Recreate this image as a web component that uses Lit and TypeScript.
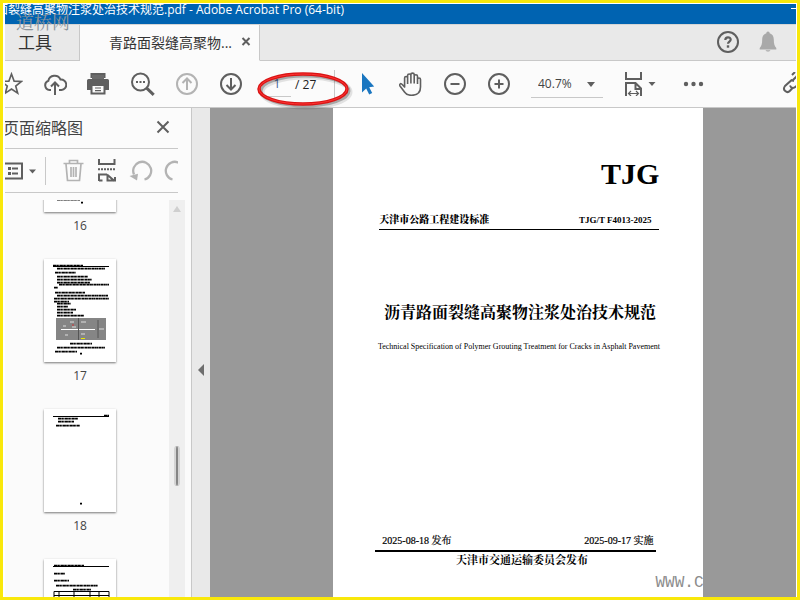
import { LitElement, html, svg, css } from "lit";
import { customElement } from "lit/decorators.js";

type Line = [x: number, y: number, w: number];

interface Thumb {
  n: number;
  rule: boolean;
  lines: Line[];
  figure?: boolean;
  table?: boolean;
}

const THUMBS: Thumb[] = [
  { n: 16, rule: true, lines: [[14, 80, 40], [14, 86, 40], [13, 91, 23], [37, 94, 2]] },
  {
    n: 17, rule: true, figure: true,
    lines: [[9, 7, 30], [13, 10, 48], [11, 14, 21], [13, 18, 31], [13, 21, 35], [13, 24, 33], [15, 26, 50],
      [10, 29, 4], [11, 34, 30], [13, 37, 51], [10, 40, 55], [10, 43, 15], [13, 45, 14], [13, 48, 11],
      [13, 51, 19], [13, 54, 16], [13, 57, 27], [26, 85, 22], [13, 89, 48], [11, 93, 22], [36, 95, 2]],
  },
  { n: 18, rule: true, lines: [[60, 7, 5], [14, 10, 20], [14, 13, 16], [12, 17, 24], [36, 95, 2]] },
  { n: 19, rule: true, table: true, lines: [[10, 7, 30], [10, 15, 11], [10, 22, 15], [12, 27, 42], [29, 31, 18]] },
];

@customElement("page-thumb")
class PageThumb extends LitElement {
  static properties = { page: { attribute: false } };
  declare page: Thumb;

  static styles = css`
    :host { display: flex; flex-direction: column; align-items: center; flex: none; height: 150px; }
    .sheet { display: block; width: 72px; height: 103px; padding: 0; border: 0; background: #fff; box-shadow: 0 1px 2px #777; }
    .label { font: 12px/16px "Open Sans", "Noto Sans", sans-serif; color: #444; margin-top: 6px; }
    svg { display: block; }
  `;

  render() {
    const p = this.page;
    return html`
      <button class="sheet" aria-label="Page ${p.n}">
        <svg width="72" height="103" viewBox="0 0 72 103">
          ${p.rule ? svg`<path d="M9 7.500H65" stroke="#000"/>` : null}
          ${p.lines.map(([x, y, w]) => svg`
            <path d="M${x} ${y - 0.4}h${w}" stroke="#000" stroke-width="1.6" stroke-dasharray="3 .3 2 .2 1 .4"/>`)}
          ${p.figure ? svg`
            <rect x="12" y="59" width="50" height="22" fill="#858585"/>
            <path d="M17 70.500H51" stroke="#fff"/>
            <path d="M34.5 59V81M54 61v18" stroke="#555"/>
            <path d="M26 63h4M37 63h5M19 67h3M21 76h3M37 75h4M55 70h5M28 68h4" stroke="#ddd"/>
            <path d="M37 79.500h4" stroke="#e9e900"/><path d="M28 66h2" stroke="#c33"/>` : null}
          ${p.table ? svg`<path d="M10 32.500H65V50H10zM10 36.500H65M10 40H65M15 33V50M30 33V50M46 33V50M55 33V50" fill="none" stroke="#000"/>` : null}
        </svg>
      </button>
      <span class="label">${p.n}</span>`;
  }
}

const icon = (body: unknown, w = 24) =>
  html`<svg class="icon" width=${w} height="24" viewBox="0 0 ${w} 24" aria-hidden="true">${body}</svg>`;

const ICONS = {
  star: svg`<path d="M12.500 2l2.600 7.100 7.400.3-5.800 4.600 2 7.200-6.200-4.200-6.200 4.200 2-7.200L2.500 9.400l7.400-.3z" stroke-width="1.600"/>`,
  cloud: svg`<path d="M8 18H6.500A4.700 4.700 0 0 1 5.300 8.900 6.500 6.500 0 0 1 17.500 7.500a5.200 5.200 0 0 1 1 10.500H16"/><path d="M12 23V11M8 14.500l4-4 4 4"/>`,
  print: svg`<path d="M3.500 1H18.500V6H3.500zM0 8.500a1.500 1.500 0 0 1 1.500-1.500H20.500A1.500 1.500 0 0 1 22 8.500V18H0z" fill="#5f5f5f" stroke="none"/><path d="M5 3H17V7H5z" fill="#6b6b6b" stroke="none"/><path d="M4.500 13H17.500v8.500H4.500z" fill="#fbfbfb"/><path d="M8 16h6M8 18.700h6" stroke-width="1.200"/>`,
  search: svg`<circle cx="9.500" cy="10" r="8.500"/><path d="M15.700 16.200l7 6.600" stroke-width="3"/><path d="M5 10h2M8.500 10h2M12 10h2"/>`,
  up: svg`<circle cx="12" cy="12" r="10"/><path d="M12 18V7M7.500 11L12 6.500 16.500 11"/>`,
  down: svg`<circle cx="12" cy="12" r="10"/><path d="M12 6V17M7.500 13L12 17.500 16.500 13"/>`,
  pointer: svg`<path d="M7 1V20.500l4.200-4 3 6 3-1.400-3-5.800 5-.8z" fill="#1a76c0" stroke="none"/>`,
  hand: svg`<path d="M6 15.500L3 12.300c-1.300-1.600-3 .2-2 1.700L5.500 20c1.500 2.300 3.500 3.300 7 3.300 6 0 9-3 9-8.300V7.500c0-2-3-2-3 0V12M18.500 8V4.300c0-2-3.300-2-3.300 0V11.500M15.200 4.300V2.600c0-2-3.300-2-3.300 0V11.500M11.900 3.500c0-2-3.300-2-3.300 0V12M8.600 6c0-2-3-2-3 0v9.500" stroke-width="1.600"/>`,
  minus: svg`<circle cx="12" cy="12" r="10"/><path d="M7.500 12h9"/>`,
  plus: svg`<circle cx="12" cy="12" r="10"/><path d="M7.500 12h9M12 7.500v9"/>`,
  fit: svg`<path d="M1 0V7H16V0M1 24V11H10.500L16 16.500V24M10.500 11v6H16"/><path d="M3.500 21.500h10M6 19L3.500 21.500 6 24M11 19l2.500 2.500L11 24" stroke-width="1.200"/><path d="M23.500 10h7l-3.500 4z" fill="#5f5f5f" stroke="none"/>`,
  dots: svg`<g fill="#5f5f5f" stroke="none"><circle cx="4" cy="12" r="2.200"/><circle cx="11.500" cy="12" r="2.200"/><circle cx="19" cy="12" r="2.200"/></g>`,
  link: svg`<path d="M12 9L9.500 8.200 3 14c-3 4 2 8 5 4.800l3-3.300M8 13.500c1 3 4 3 6 1l5-5c3-4-2-8-5-4.500l-3 3M10 3l3-3"/>`,
  help: svg`<circle cx="12" cy="12" r="10"/><path d="M9.300 10c0-3.600 5.400-3.400 5.400-.4 0 2-2.700 2-2.700 4.200" stroke-width="2.200"/><path d="M12 15.300v2.400" stroke-width="2.400"/>`,
  bell: svg`<path d="M12 1.500c1.200 0 1.600.8 1.600 1.700 3 .9 4.200 3.300 4.200 6.300 0 4.500.8 6.500 2.500 8.500v1.500H3.700V18c1.700-2 2.500-4 2.500-8.500 0-3 1.200-5.400 4.200-6.300 0-.9.400-1.700 1.600-1.700zM9.500 20.300h5c-.8 1.700-4.200 1.700-5 0z" fill="#a9a9a9" stroke="none"/>`,
  close: svg`<path d="M6.500 5.500l11 11M17.500 5.500l-11 11"/>`,
  tabClose: svg`<path d="M7.500 8l7 7M14.500 8l-7 7"/>`,
  options: svg`<path d="M0 4.500H17V19.500H0"/><path d="M3 9.500h3M3 14.500h3" stroke-width="3"/><path d="M7 9.500h6M7 14.500h6"/><path d="M24 10.500h7l-3.500 4z" fill="#5f5f5f" stroke="none"/>`,
  trash: svg`<path d="M2.500 4.500H22.500M8.500 4V1.500h8V4M5 5L6.500 21.500h12L20 5M10 8v10M12.500 8v10M15 8v10" stroke-width="1.700"/>`,
  split: svg`<path d="M4 0V5H19.500V0M4 22V15.500H12M12 15.500L19.500 22M4 21.500H7.500M12.500 15.500V21.500H20V18"/><path d="M3 10.300H21" stroke-dasharray="2 1"/>`,
  undo: svg`<path d="M15.500 20.500A9 9 0 1 0 5 15.500" stroke-width="2.300"/><path d="M.500 17L9 14.800 8 21.500z" fill="#b3b3b3" stroke="none"/>`,
  redo: svg`<path d="M9.500 20.500A9 9 0 1 1 20 15.500" stroke-width="2.300"/>`,
};

@customElement("app-root")
class AppRoot extends LitElement {
  static styles = css`
    :host {
      --line: #c8c8c8; --panel: #fbfbfb; --ink: #5f5f5f;
      display: flex; box-sizing: border-box; height: 100vh; min-height: 400px;
      border: 3px solid #f9e80b; padding: 1px 1px 0 2px; background: #fff;
      font-family: "Open Sans", "Noto Sans CJK SC", sans-serif; color: #444;
    }
    * { box-sizing: border-box; }
    button, input, select { font: inherit; color: inherit; margin: 0; padding: 0; border: 0; border-radius: 0; background: none; }
    .clip { flex: 1; min-width: 0; display: flex; overflow: hidden; }
    /* The window runs 16px past the left edge of the frame. */
    .window { flex: 1; min-width: 0; margin-left: -16px; display: flex; flex-direction: column; position: relative; }
    .icon { display: block; flex: none; fill: none; stroke: var(--ink); stroke-width: 2; }
    .off .icon { stroke: #b3b3b3; }

    .titlebar { height: 20px; flex: none; display: flex; justify-content: space-between; background: #0063b1; color: #fff; padding-left: 7px; white-space: nowrap; overflow: hidden; }
    .titlebar h1 { font-size: 12px; line-height: 12px; font-weight: 400; margin: 0; }
    .minimize { width: 5px; height: 5px; border-bottom: 1px solid #fff; }
    .watermark { position: absolute; left: 27px; top: 6px; font: 18px/22px "Noto Serif CJK SC", "Noto Sans CJK SC", serif; color: #8b939b; }

    .tabs { height: 37px; flex: none; display: flex; align-items: stretch; background: #e9e9e9; border-top: 1px solid #d5d5d5; }
    .tab { display: flex; align-items: center; border-right: 1px solid var(--line); border-bottom: 1px solid var(--line); white-space: nowrap; color: #333; }
    .tools { width: 91px; padding: 0 0 2px 29px; font-size: 17px; }
    .doc { width: 180px; padding: 0 0 2px 29px; font-size: 14px; background: var(--panel); border-bottom-color: var(--panel); justify-content: space-between; }
    .fill { flex: 1; display: flex; justify-content: flex-end; align-items: center; border-bottom: 1px solid var(--line); padding: 0 8px 2px 0; }
    .fill button { width: 40px; display: flex; justify-content: center; }

    .toolbar { height: 47px; flex: none; display: flex; align-items: center; background: var(--panel); border-bottom: 1px solid var(--line); position: relative; }
    .tool { width: 44px; height: 44px; flex: none; display: flex; align-items: center; justify-content: center; }
    .wide { width: 57px; margin: 0 2px 0 10px; }
    .pager { width: 92px; flex: none; display: flex; align-items: center; font-size: 12px; color: #222; padding-left: 10px; }
    .pager input { width: 28px; height: 26px; text-align: center; border-bottom: 1px solid var(--line); color: #46629a; }
    .pager span { padding-left: 4px; flex: 1; white-space: nowrap; }
    .bar { width: 1px; height: 28px; background: var(--line); margin-right: 10px; }
    .mark { position: absolute; left: 266px; top: 8px; pointer-events: none; }
    .zoom { position: relative; width: 72px; height: 28px; flex: none; margin-left: 10px; border-bottom: 1px solid var(--line); font-size: 12px; }
    .zoom select { appearance: none; width: 100%; height: 27px; padding-left: 7px; }
    .zoom svg { position: absolute; right: 8px; top: 12px; pointer-events: none; }
    .last { margin-left: auto; margin-right: -20px; }

    .body { flex: 1; min-height: 0; display: flex; }
    .side { width: 203px; flex: none; display: flex; flex-direction: column; background: var(--panel); border-right: 1px solid var(--line); padding-left: 16px; }
    .head { height: 41px; flex: none; display: flex; align-items: center; justify-content: space-between; margin-right: 13px; padding: 0 3px 1px 0; border-bottom: 1px solid var(--line); }
    .head h2 { font-size: 16px; line-height: 24px; font-weight: 400; margin: 0 0 0 -2px; }
    .actions { height: 44px; flex: none; display: flex; align-items: center; gap: 10px; margin-right: 13px; border-bottom: 1px solid var(--line); overflow: hidden; }
    .actions .bar { margin: 0 5px 0 -1px; flex: none; }
    .scroller { flex: 1; min-height: 0; margin-top: 7px; display: flex; overflow: hidden; }
    .list { flex: 1; padding-right: 14px; }
    /* Scrolled part of the way down the page list. */
    .list page-thumb:first-child { margin-top: -91px; }
    .track { width: 16px; margin-right: 6px; background: #efefef; display: flex; flex-direction: column; align-items: center; padding-top: 6px; gap: 234px; }
    .track i { width: 6px; height: 40px; flex: none; background: #858585; border: 2px solid #d4d4d4; border-width: 0 2px; border-radius: 3px; }
    .gutter { width: 18px; flex: none; background: #e9e9e9; display: flex; justify-content: center; align-items: center; padding-top: 34px; }

    .canvas { flex: 1; min-width: 0; background: #999; display: grid; grid-template-columns: 4fr 12fr 3fr; overflow: hidden; }
    .sheet { grid-column: 2; background: #fff; color: #000; padding: 48px 0 0 1px; display: flex; flex-direction: column; min-width: 0; overflow: hidden; font-family: "Liberation Serif", "Noto Serif CJK SC", "Noto Sans CJK SC", serif; white-space: nowrap; }
    .code { font-size: 30px; line-height: 36px; font-weight: 700; text-align: right; margin: 0 44px; }
    .row { display: flex; justify-content: space-between; line-height: 16px; }
    .std { font-size: 10px; font-weight: 700; margin: 20px 44px 0 45px; padding: 0 8px 1px 0; border-bottom: 1px solid #000; }
    .std b:last-child { font-size: 9px; }
    .sheet h3 { font-size: 16px; line-height: 24px; font-weight: 700; text-align: center; margin: 71px 0 0 2px; }
    .en { font-size: 8px; line-height: 16px; text-align: center; margin: 14px 0 0; }
    .dates { font-size: 10px; margin: 178px 47px 0 41px; padding: 0 3px 1px 7px; border-bottom: 2px solid #000; -webkit-text-stroke: 0.2px #000; }
    .issuer { font-size: 11px; line-height: 16px; font-weight: 700; text-align: center; margin: 0 0 0 6px; }
    .site { align-self: flex-end; width: 48px; overflow: hidden; font: 16px/18px "Liberation Mono", monospace; color: #8c8c8c; margin: 6px 0 0; }
  `;

  private tool(name: keyof typeof ICONS, label: string, extra = "") {
    const wide = name === "fit";
    return html`<button class="tool ${extra}" aria-label=${label}>${icon(ICONS[name], wide ? 33 : 24)}</button>`;
  }

  render() {
    return html`
      <div class="clip"><div class="window">
        <header class="titlebar">
          <h1>面裂缝高聚物注浆处治技术规范.pdf - Adobe Acrobat Pro (64-bit)</h1>
          <button class="minimize" aria-label="Minimize"></button>
        </header>
        <nav class="tabs">
          <button class="tab tools">工具</button>
          <div class="tab doc"><span>青路面裂缝高聚物...</span>
            <button aria-label="Close tab">${icon(ICONS.tabClose)}</button></div>
          <div class="fill">
            <button aria-label="Help">${icon(ICONS.help)}</button>
            <button aria-label="Notifications">${icon(ICONS.bell)}</button>
          </div>
        </nav>
        <div class="toolbar">
          ${this.tool("star", "Favourites")}
          ${this.tool("cloud", "Upload")}
          ${this.tool("print", "Print")}
          ${this.tool("search", "Find")}
          ${this.tool("up", "Previous page", "off")}
          ${this.tool("down", "Next page")}
          <div class="pager">
            <input aria-label="Page number" value="1"><span>/ 27</span><div class="bar"></div>
          </div>
          ${this.tool("pointer", "Select")}
          ${this.tool("hand", "Pan")}
          ${this.tool("minus", "Zoom out")}
          ${this.tool("plus", "Zoom in")}
          <div class="zoom">
            <select aria-label="Zoom level"><option>40.7%</option></select>
            <svg width="8" height="5"><path d="M0 0H8L4 5z" fill="#5f5f5f"/></svg>
          </div>
          ${this.tool("fit", "Fit width", "wide")}
          ${this.tool("dots", "More tools")}
          ${this.tool("link", "Share link", "last")}
          <svg class="mark" width="100" height="42" viewBox="0 0 100 42" fill="none">
            <ellipse cx="51" cy="23" rx="44" ry="15" stroke="#000" stroke-opacity=".1" stroke-width="5"/>
            <ellipse cx="50" cy="22" rx="44" ry="15" stroke="#000" stroke-opacity=".25" stroke-width="3"/>
            <ellipse cx="48" cy="20" rx="44" ry="15" stroke="#d81414" stroke-width="3.500"/>
            <ellipse cx="48" cy="20" rx="44" ry="15" stroke="#f33" stroke-width="1"/>
          </svg>
        </div>
        <div class="body">
          <aside class="side">
            <div class="head"><h2>页面缩略图</h2><button aria-label="Close panel">${icon(ICONS.close)}</button></div>
            <div class="actions">
              <button aria-label="Options">${icon(ICONS.options, 31)}</button>
              <div class="bar"></div>
              <button class="off" aria-label="Delete pages">${icon(ICONS.trash)}</button>
              <button aria-label="Split pages">${icon(ICONS.split)}</button>
              <button class="off" aria-label="Rotate left">${icon(ICONS.undo)}</button>
              <button class="off" aria-label="Rotate right">${icon(ICONS.redo)}</button>
            </div>
            <div class="scroller">
              <div class="list">${THUMBS.map((t) => html`<page-thumb .page=${t}></page-thumb>`)}</div>
              <div class="track"><svg width="8" height="6"><path d="M0 6L4 0l4 6z" fill="#cfcfcf"/></svg><i></i></div>
            </div>
          </aside>
          <button class="gutter" aria-label="Collapse panel">
            <svg width="6" height="12"><path d="M6 0V12L0 6z" fill="#6e6e6e"/></svg>
          </button>
          <main class="canvas">
            <article class="sheet">
              <div class="code">TJG</div>
              <div class="row std"><b>天津市公路工程建设标准</b><b>TJG/T F4013-2025</b></div>
              <h3>沥青路面裂缝高聚物注浆处治技术规范</h3>
              <p class="en">Technical Specification of Polymer Grouting Treatment for Cracks in Asphalt Pavement</p>
              <div class="row dates"><span>2025-08-18 发布</span><span>2025-09-17 实施</span></div>
              <div class="issuer">天津市交通运输委员会发布</div>
              <p class="site">WWW.C</p>
            </article>
          </main>
        </div>
        <div class="watermark">道桥网</div>
      </div></div>`;
  }
}
